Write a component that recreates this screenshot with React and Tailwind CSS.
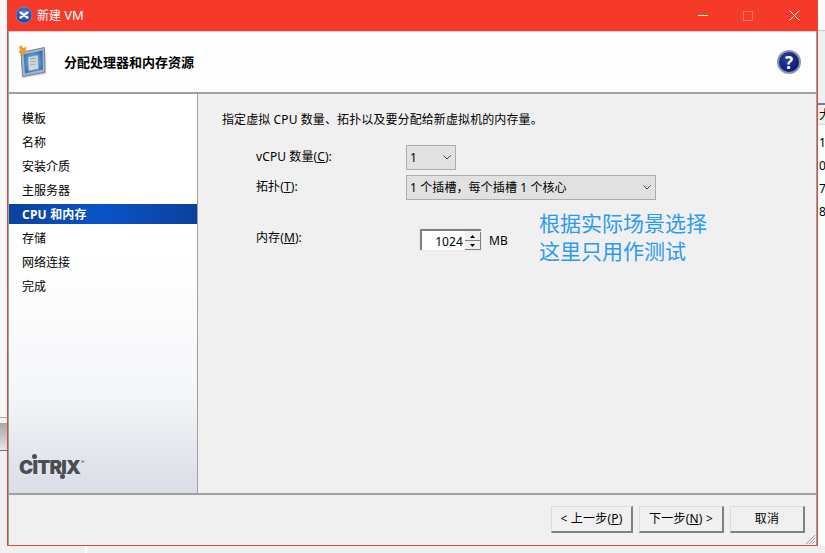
import React from 'react';

const steps = ['模板', '名称', '安装介质', '主服务器', 'CPU 和内存', '存储', '网络连接', '完成'];

const Select = ({ value, width }) => (
  <div className={`flex h-[25px] items-center justify-between border border-[#adadad] bg-[#e1e1e1] pl-[3px] pr-[4px] ${width}`}>
    <span className="text-[12px] leading-[23px] text-black">{value}</span>
    <svg width="8" height="5" viewBox="0 0 8 5" className="text-[#444]">
      <path d="M0.5 0.5 L4 4 L7.5 0.5" fill="none" stroke="currentColor" strokeWidth="1" />
    </svg>
  </div>
);

const WizardButton = ({ children, width }) => (
  <button className={`flex h-[27px] items-center justify-center border-t border-l border-t-[#dcdcdc] border-l-[#dcdcdc] border-r-2 border-b-2 border-r-[#808080] border-b-[#808080] bg-[#f0f0f0] text-[12px] leading-none tracking-[0.2px] text-black ${width}`}>
    {children}
  </button>
);

const Sidebar = () => (
  <div className="flex w-[189px] shrink-0 flex-col border-r border-[#a0a0a0] bg-linear-to-b from-white from-40% via-[#f5f6f8] via-75% to-[#d9dde6]">
    <div className="flex flex-col gap-[4px] pt-[14px]">
      {steps.map((step) => (
        <div
          key={step}
          className={
            step === 'CPU 和内存'
              ? 'h-[20px] bg-linear-to-r from-[#0a43a0] via-[#0a53c8] to-[#0b419c] pl-[13px] text-[12px] font-bold leading-[22px] tracking-[0.2px] text-white'
              : 'h-[20px] pl-[13px] text-[12px] leading-[22px] text-black'
          }
        >
          {step}
        </div>
      ))}
    </div>
    <div className="relative mt-auto mb-[15px] ml-[10px] h-[24px] w-[70px] font-['Inter',sans-serif] text-[19px] font-black leading-[27px] tracking-[-0.8px] text-[#4a4d52]">
      <span>CITRIX</span>
      <span className="absolute left-[13px] top-0 h-[5px] w-[5px] rounded-full bg-[#4a4d52]" />
      <span className="absolute left-[41px] top-[20px] h-[5px] w-[5px] rounded-full bg-[#4a4d52]" />
      <span className="absolute left-[62px] top-[-5px] text-[5px] font-normal tracking-normal">®</span>
    </div>
  </div>
);

const Spinner = () => (
  <div className="flex h-[21px] w-[61px] border-t-2 border-l-2 border-[#808080] bg-white outline outline-1 outline-[#e8e8e8]">
    <span className="flex-1 pr-[2px] text-right text-[12px] leading-[21px] text-black">1024</span>
    <div className="flex w-[16px] flex-col border-t border-[#f0f0f0] bg-[#f0f0f0]">
      <div className="flex h-[9px] items-center justify-center border-r border-b border-[#808080]">
        <svg width="5" height="3"><path d="M2.5 0 L5 3 H0 Z" fill="#000" /></svg>
      </div>
      <div className="flex h-[9px] items-center justify-center border-r border-b border-[#808080]">
        <svg width="5" height="3"><path d="M0 0 H5 L2.5 3 Z" fill="#000" /></svg>
      </div>
    </div>
  </div>
);

const Content = () => (
  <div className="relative flex-1 bg-[#f0f0f0] pl-[24px] pt-[17px] text-[12px] tracking-[0.1px] text-black">
    <p className="leading-[18px]">指定虚拟 CPU 数量、拓扑以及要分配给新虚拟机的内存量。</p>
    <div className="mt-[16px] flex items-start pl-[34px]">
      <span className="w-[150px] leading-[23px]">vCPU 数量(<u>C</u>):</span>
      <Select value="1" width="w-[50px]" />
    </div>
    <div className="mt-[5px] flex items-start pl-[34px]">
      <span className="w-[150px] leading-[23px]">拓扑(<u>T</u>):</span>
      <Select value="1 个插槽，每个插槽 1 个核心" width="w-[250px]" />
    </div>
    <div className="mt-[29px] flex items-start pl-[34px]">
      <span className="w-[164px] leading-[17px]">内存(<u>M</u>):</span>
      <Spinner />
      <span className="ml-[8px] leading-[23px]">MB</span>
    </div>
    {/* annotation pasted on top of the screenshot */}
    <div className="absolute left-[341px] top-[115px] text-[21px] leading-[28px] tracking-normal text-[#2b9af3]">
      <p>根据实际场景选择</p>
      <p>这里只用作测试</p>
    </div>
  </div>
);

const CitrixBadge = () => (
  <svg width="18" height="18" viewBox="0 0 18 18" className="mb-[1px]">
    <defs>
      <radialGradient id="badge" cx="50%" cy="35%" r="65%">
        <stop offset="0%" stopColor="#4f7fdc" />
        <stop offset="100%" stopColor="#1c3f9e" />
      </radialGradient>
    </defs>
    <circle cx="9" cy="9" r="8" fill="url(#badge)" stroke="#7f8fc0" strokeWidth="0.8" />
    <path d="M5.5 6.5 L12.5 11.5 M12.5 6.5 L5.5 11.5" stroke="#fff" strokeWidth="2.2" strokeLinecap="round" />
  </svg>
);

const ServerIcon = () => (
  <svg width="30" height="34" viewBox="0 0 30 34">
    <defs>
      <radialGradient id="screen" cx="50%" cy="50%" r="65%">
        <stop offset="0%" stopColor="#7fb8ec" />
        <stop offset="100%" stopColor="#2a66b4" />
      </radialGradient>
    </defs>
    <path d="M3 8.5 L27 3.5 L28 29 L5 33 Z" fill="#8f9bab" opacity="0.5" />
    <path d="M3 7.5 L26.5 2.5 L27 27 L4.5 31.5 Z" fill="#a9b5c6" stroke="#76828f" strokeWidth="1" />
    <path d="M5.5 9.5 L24.5 5.5 L25 24.5 L7 28.5 Z" fill="url(#screen)" />
    <path d="M10 12 L20 10 L20.5 24 L10.5 26 Z" fill="#cfd8da" stroke="#7e8e9a" strokeWidth="0.5" />
    <path d="M12 14 L18 13" stroke="#5bbf7a" strokeWidth="1" />
    <path d="M12 17 L18 16 M12 20 L18 19" stroke="#98a4ac" strokeWidth="0.8" />
    <path d="M3.5 0 L5 3.2 L8.5 1.5 L7.5 5 L10.5 6.2 L7 7.5 L5 10.5 L3.3 8 L0 7.5 L2.3 5 L1 2 Z" fill="#ef9a2a" />
  </svg>
);

const HelpIcon = () => (
  <div className="flex h-[24px] w-[24px] items-center justify-center rounded-full border-2 border-[#8e93a8] bg-radial-[at_40%_30%] from-[#2a3f9e] to-[#03106c] font-['Open_Sans',sans-serif] text-[17px] font-bold leading-none text-white">
    ?
  </div>
);

const ResizeGrip = () => (
  <svg width="13" height="13" viewBox="0 0 13 13" className="absolute bottom-0 right-0">
    <path d="M12 3 L3 12 M12 6 L6 12 M12 9 L9 12" stroke="#9a9a9a" strokeWidth="1" />
  </svg>
);

const Window = () => (
  <div className="flex h-[546px] w-[811px] shrink-0 flex-col border-x border-b border-[#e0483a] bg-[#f0f0f0]">
    <div className="flex h-[31px] shrink-0 items-center bg-[#f63a2a] pl-[7px] text-white">
      <CitrixBadge />
      <span className="ml-[4px] text-[12px] leading-[31px]">新建 <span className="text-[13px]">VM</span></span>
      <div className="ml-auto flex items-center">
        <div className="h-px w-[10px] bg-white" />
        <div className="ml-[35px] h-[10px] w-[10px] border border-[#fb7d72]" />
        <svg width="11" height="11" viewBox="0 0 11 11" className="ml-[36px] mr-[17px]">
          <path d="M0.5 0.5 L10.5 10.5 M10.5 0.5 L0.5 10.5" stroke="#fff" strokeWidth="1" />
        </svg>
      </div>
    </div>
    <div className="flex min-h-0 flex-1 flex-col border-x border-[#a0a0a0]">
      <div className="flex h-[63px] shrink-0 items-center border-t border-b-2 border-t-[#d0d0d0] border-b-[#a0a0a0] bg-[#fdfdfd] pl-[9px] pr-[15px]">
        <ServerIcon />
        <span className="ml-[16px] text-[13px] font-bold leading-[20px] text-black">分配处理器和内存资源</span>
        <div className="ml-auto"><HelpIcon /></div>
      </div>
      <div className="flex min-h-0 flex-1 border-b-2 border-[#a0a0a0]">
        <Sidebar />
        <Content />
      </div>
      <div className="relative flex h-[50px] shrink-0 gap-[6px] pl-[542px] pt-[11px]">
        <WizardButton width="w-[82px]">&lt; 上一步(<u>P</u>)</WizardButton>
        <WizardButton width="w-[85px]">下一步(<u>N</u>) &gt;</WizardButton>
        <WizardButton width="w-[75px]">取消</WizardButton>
        <ResizeGrip />
      </div>
    </div>
  </div>
);

const App = () => (
  <div className="flex h-[553px] w-[825px] flex-col overflow-hidden bg-[#f0f0f0] font-['Noto_Sans','Noto_Sans_CJK_SC',sans-serif]">
    <div className="flex h-[546px] shrink-0">
      {/* slivers of the window behind */}
      <div className="flex w-[7px] shrink-0 flex-col bg-[#f0f0f0]">
        <div className="h-[417px] bg-[#f8f8f8]" />
        <div className="h-[6px] border-t border-[#a8a8a8] bg-[#f4f4f4]" />
        <div className="h-[28px] border-b border-[#6a7a8a] bg-linear-to-b from-[#a8a8a8] via-[#c4c4c4] to-[#e8e8e8]" />
      </div>
      <Window />
      <div className="flex w-[7px] shrink-0 flex-col bg-[#f0f0f0] text-[12px]">
        <div className="h-[30px] bg-[#fafafa]" />
        <div className="h-[73px] border-t border-[#c8c8c8] bg-[#f0f0f0]" />
        <div className="h-[2px] bg-[#808080]" />
        <div className="h-[19px] overflow-hidden pl-[1px] leading-[19px] text-black">大</div>
        <div className="flex-1 overflow-hidden border-t border-[#d8d8d8] bg-white pl-[1px] pt-[6px] leading-[23px] text-black">
          <div>1</div>
          <div>0</div>
          <div>7</div>
          <div>8</div>
        </div>
      </div>
    </div>
    <div className="flex h-[7px] shrink-0 pl-[85px]">
      <div className="h-full w-[2px] bg-white" />
    </div>
  </div>
);

export default App;
